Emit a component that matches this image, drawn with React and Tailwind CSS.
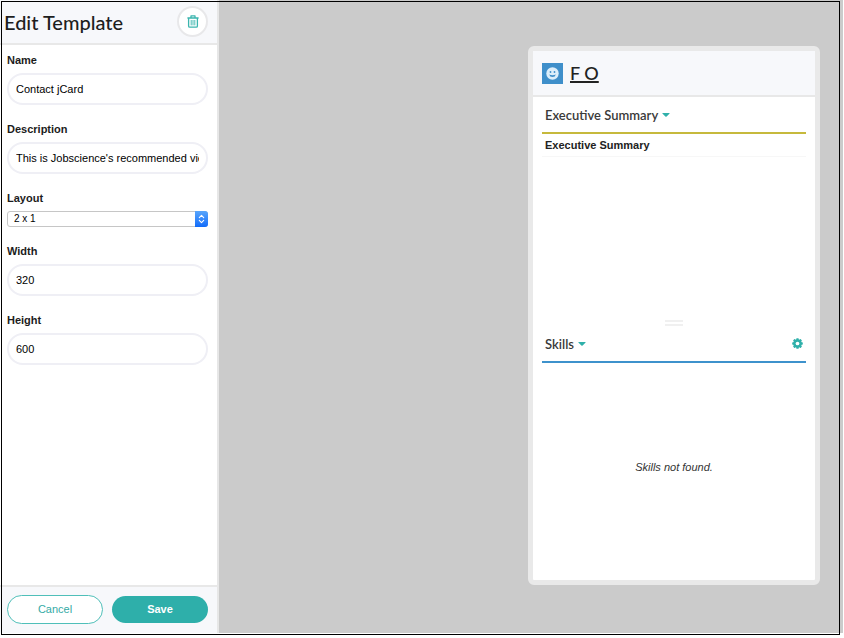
import React from "react";

function TextField({ id, label, value }) {
  return (
    <div className="flex flex-col gap-[3px]">
      <label htmlFor={id} className="text-[11px] leading-5 font-bold text-[#1c1c1c]">
        {label}
      </label>
      <input
        id={id}
        type="text"
        defaultValue={value}
        className="h-8 w-full rounded-2xl border-2 border-[#efeff5] bg-white px-[7px] text-[11px] text-black outline-none"
      />
    </div>
  );
}

function LayoutField() {
  return (
    <div className="flex flex-col gap-[3px]">
      <label htmlFor="layout" className="text-[11px] leading-5 font-bold text-[#1c1c1c]">
        Layout
      </label>
      <div className="relative h-4">
        <select
          id="layout"
          defaultValue="2x1"
          className="block h-4 w-full appearance-none rounded-[3px] border border-[#c6c6c6] bg-white pl-[6px] text-[10px] leading-[14px] text-black outline-none"
        >
          <option value="1x1">1 x 1</option>
          <option value="2x1">2 x 1</option>
        </select>
        <span className="pointer-events-none absolute inset-y-0 right-0 flex w-[13px] items-center justify-center rounded-r-[3px] bg-gradient-to-b from-[#58a5fb] to-[#0f6bfa]">
          <svg width="7" height="10" viewBox="0 0 7 10" fill="none" stroke="white" strokeWidth="1.1" strokeLinecap="round" strokeLinejoin="round">
            <path d="M1.3 3.6 3.5 1.4 5.7 3.6M1.3 6.4 3.5 8.6 5.7 6.4" />
          </svg>
        </span>
      </div>
    </div>
  );
}

function TrashIcon() {
  return (
    <svg width="12" height="13" viewBox="0 0 12 13" fill="none" stroke="#3bb5ae" strokeWidth="1.3" strokeLinejoin="round">
      <path d="M0.4 3H11.6M4 2.8V0.9H8V2.8M1.6 3.2V11Q1.6 12.2 2.8 12.2H9.2Q10.4 12.2 10.4 11V3.2" />
      <path d="M4.2 5V10.4M6 5V10.4M7.8 5V10.4" strokeWidth="0.9" />
    </svg>
  );
}

function SmileIcon() {
  return (
    <svg width="13" height="13" viewBox="0 0 13 13">
      <circle cx="6.5" cy="6.5" r="6.2" fill="#dceefa" />
      <ellipse cx="4.5" cy="5" rx="0.9" ry="1.1" fill="#3f8fca" />
      <ellipse cx="8.5" cy="5" rx="0.9" ry="1.1" fill="#3f8fca" />
      <path d="M3.2 7.5Q6.5 9 9.8 7.5Q9.2 10 6.5 10T3.2 7.5Z" fill="#3f8fca" />
    </svg>
  );
}

function Caret() {
  return (
    <svg width="8" height="4" viewBox="0 0 8 4" fill="#2fb0aa">
      <path d="M0.8 0H7.2Q8 0 7.4 0.7L4.6 3.6Q4 4.1 3.4 3.6L0.6 0.7Q0 0 0.8 0Z" />
    </svg>
  );
}

function GearIcon() {
  return (
    <svg width="11" height="11" viewBox="0 0 22 22">
      <g fill="#2fb0aa">
        <rect x="8.6" y="0.4" width="4.8" height="21.2" rx="1.2" />
        <rect x="8.6" y="0.4" width="4.8" height="21.2" rx="1.2" transform="rotate(45 11 11)" />
        <rect x="8.6" y="0.4" width="4.8" height="21.2" rx="1.2" transform="rotate(90 11 11)" />
        <rect x="8.6" y="0.4" width="4.8" height="21.2" rx="1.2" transform="rotate(135 11 11)" />
        <circle cx="11" cy="11" r="8.6" />
      </g>
      <circle cx="11" cy="11" r="3.7" fill="white" />
    </svg>
  );
}

function Sidebar() {
  return (
    <aside className="flex w-[219px] shrink-0 flex-col border-r-2 border-[#e7e7e7] bg-white">
      <header className="flex h-[45px] shrink-0 items-center justify-between border-b-2 border-[#e8e8e8] bg-[#f7f8fb] pr-[9px] pl-1">
        <h1 className="font-['Lato','Open_Sans',sans-serif] text-[20px] leading-6 font-medium text-[#1e1e1e]">
          Edit Template
        </h1>
        <button
          type="button"
          aria-label="Delete template"
          className="flex size-[31px] items-center justify-center rounded-full border-2 border-[#e8e8ea] bg-white"
        >
          <TrashIcon />
        </button>
      </header>
      <form className="flex flex-1 flex-col gap-[14px] pt-[5px] pr-[9px] pl-[7px]">
        <TextField id="name" label="Name" value="Contact jCard" />
        <TextField id="description" label="Description" value="This is Jobscience's recommended view" />
        <LayoutField />
        <TextField id="width" label="Width" value="320" />
        <TextField id="height" label="Height" value="600" />
      </form>
      <footer className="flex h-12 shrink-0 items-center justify-between border-t-2 border-[#e8e8e8] bg-[#f7f8fb] pr-[9px] pb-[2px] pl-[7px]">
        <button type="button" className="h-[29px] w-24 rounded-full border border-[#4fbfb9] bg-white text-[11px] text-[#35aaa5]">
          Cancel
        </button>
        <button type="button" className="h-[27px] w-24 rounded-full bg-[#2eafaa] text-[11px] font-bold text-white">
          Save
        </button>
      </footer>
    </aside>
  );
}

function SectionTitle({ children }) {
  return (
    <button type="button" className="flex items-center gap-1 font-['Lato','Open_Sans',sans-serif] text-[13px] leading-5 font-semibold text-[#3a3a3a]">
      {children}
      <Caret />
    </button>
  );
}

function Card() {
  return (
    <article className="flex w-[292px] flex-col rounded-md border-[5px] border-[#e9e9e9] bg-white">
      <header className="flex h-[46px] shrink-0 items-center gap-[7px] border-b-2 border-[#e8e8e8] bg-[#f7f8fb] px-[9px]">
        <span className="flex size-[21px] items-center justify-center bg-[#3f8fca]">
          <SmileIcon />
        </span>
        <a href="#" className="font-['Lato','Open_Sans',sans-serif] text-[18px] leading-6 font-medium text-[#222] underline decoration-2">
          F O
        </a>
      </header>
      <section className="flex-[7] px-[9px]">
        <div className="flex h-[37px] items-center border-b-2 border-[#c6b93c] px-[3px] pt-px">
          <SectionTitle>Executive Summary</SectionTitle>
        </div>
        <h3 className="border-b border-[#f7f7f7] px-[3px] text-[11px] leading-[22px] font-bold text-[#222]">
          Executive Summary
        </h3>
      </section>
      <div className="mx-auto h-[6px] w-[18px] shrink-0 border-y-2 border-[#f0f0f0]" />
      <section className="flex flex-[8] flex-col px-[9px]">
        <div className="flex h-[37px] shrink-0 items-center justify-between border-b-2 border-[#3e92cc] px-[3px] pt-px">
          <SectionTitle>Skills</SectionTitle>
          <button type="button" aria-label="Skills settings">
            <GearIcon />
          </button>
        </div>
        <p className="flex flex-1 items-center justify-center pb-2 text-[11px] text-[#333] italic">
          Skills not found.
        </p>
      </section>
    </article>
  );
}

export default function App() {
  return (
    <div className="relative h-screen min-h-[480px] bg-white pr-px pb-[5px] font-['Liberation_Sans',Arial,sans-serif]">
      <div className="flex h-full bg-[#cbcbcb]">
        <Sidebar />
        <main className="flex flex-1 justify-end pt-[46px] pr-[23px] pb-12">
          <Card />
        </main>
      </div>
      <div className="pointer-events-none absolute top-px right-1 bottom-[3px] left-px border border-black" />
    </div>
  );
}
